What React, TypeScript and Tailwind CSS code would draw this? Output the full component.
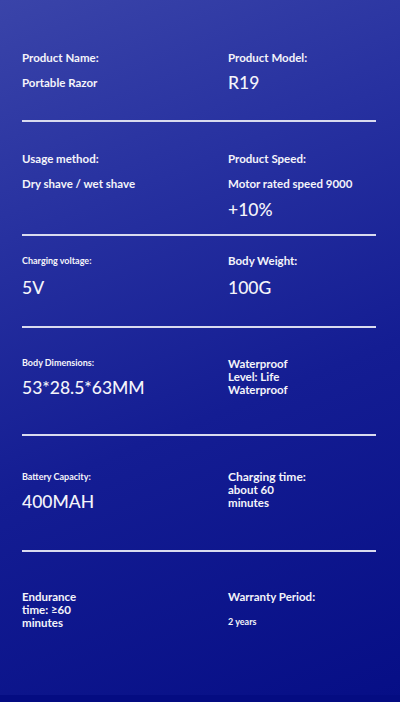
import React from "react";

const Divider = () => <div className="ml-[22px] mr-[24px] h-[2px] bg-[#d9dbef]" />;

export default function App() {
  return (
    <div
      className="relative w-[400px] h-[702px] overflow-hidden text-[#f4f4fa] bg-[linear-gradient(158deg,#3a44a9_0%,#2731a0_28%,#141d93_58%,#060e86_100%)]"
      style={{ fontFamily: "Lato, 'Open Sans', sans-serif" }}
    >
      {/* Section 1 */}
      <div className="h-[120px] grid grid-cols-[206px_1fr] px-[22px]">
        <div className="pt-[50px]">
          <div className="text-[11.5px] leading-[15px] font-bold">Product Name:</div>
          <div className="mt-[10px] text-[11.5px] leading-[15px] font-bold">Portable Razor</div>
        </div>
        <div className="pt-[50px]">
          <div className="text-[11.5px] leading-[15px] font-bold">Product Model:</div>
          <div className="mt-[7px] text-[17.5px] leading-[22px] font-medium">R19</div>
        </div>
      </div>
      <Divider />
      {/* Section 2 */}
      <div className="h-[112px] grid grid-cols-[206px_1fr] px-[22px]">
        <div className="pt-[29px]">
          <div className="text-[11.5px] leading-[15px] font-bold">Usage method:</div>
          <div className="mt-[10px] text-[11.5px] leading-[15px] font-bold">Dry shave / wet shave</div>
        </div>
        <div className="pt-[29px]">
          <div className="text-[11.5px] leading-[15px] font-bold">Product Speed:</div>
          <div className="mt-[10px] text-[11.5px] leading-[15px] font-bold">Motor rated speed 9000</div>
          <div className="mt-[8px] text-[17.5px] leading-[22px] font-medium">+10%</div>
        </div>
      </div>
      <Divider />
      {/* Section 3 */}
      <div className="h-[90px] grid grid-cols-[206px_1fr] px-[22px]">
        <div className="pt-[17px]">
          <div className="text-[9px] leading-[15px] font-bold">Charging voltage:</div>
          <div className="mt-[9px] text-[17.5px] leading-[22px] font-medium">5V</div>
        </div>
        <div className="pt-[17px]">
          <div className="text-[11.5px] leading-[15px] font-bold">Body Weight:</div>
          <div className="mt-[9px] text-[17.5px] leading-[22px] font-medium">100G</div>
        </div>
      </div>
      <Divider />
      {/* Section 4 */}
      <div className="h-[106px] grid grid-cols-[206px_1fr] px-[22px]">
        <div className="pt-[27px]">
          <div className="text-[9px] leading-[15px] font-bold">Body Dimensions:</div>
          <div className="mt-[7px] text-[17.5px] leading-[22px] font-medium">53*28.5*63MM</div>
        </div>
        <div className="pt-[29px] text-[11.5px] leading-[13px] font-bold">
          <div>Waterproof</div>
          <div>Level: Life</div>
          <div>Waterproof</div>
        </div>
      </div>
      <Divider />
      {/* Section 5 */}
      <div className="h-[114px] grid grid-cols-[206px_1fr] px-[22px]">
        <div className="pt-[33px]">
          <div className="text-[9px] leading-[15px] font-bold">Battery Capacity:</div>
          <div className="mt-[7px] text-[17.5px] leading-[22px] font-medium">400MAH</div>
        </div>
        <div className="pt-[34px] font-bold text-[11.5px] leading-[13px]">
          <div className="text-[12px]">Charging time:</div>
          <div>about 60</div>
          <div>minutes</div>
        </div>
      </div>
      <Divider />
      {/* Section 6 */}
      <div className="h-[143px] grid grid-cols-[206px_1fr] px-[22px]">
        <div className="pt-[38px] text-[11.5px] leading-[13px] font-bold">
          <div>Endurance</div>
          <div>time: ≥60</div>
          <div>minutes</div>
        </div>
        <div className="pt-[37px]">
          <div className="text-[11.5px] leading-[15px] font-bold">Warranty Period:</div>
          <div className="mt-[12px] text-[9px] leading-[12px] font-bold">2 years</div>
        </div>
      </div>
      <div className="h-[7px] bg-[#040c82]" />
    </div>
  );
}
